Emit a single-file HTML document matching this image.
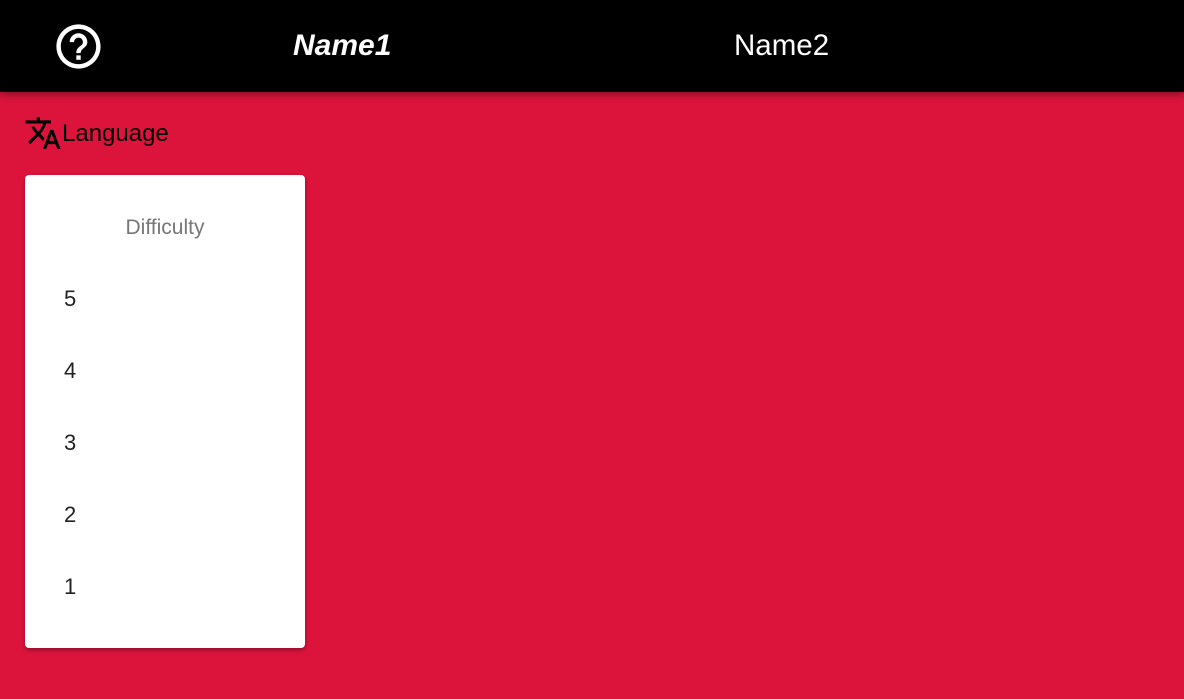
<!DOCTYPE html>
<html><head><style>
body{margin:0;width:1184px;height:699px;background:#dc143c;font-family:"Liberation Sans",sans-serif;overflow:hidden;position:relative}
.hdr{position:absolute;left:0;top:0;width:1184px;height:92px;background:#000;box-shadow:0 2px 8px rgba(0,0,0,.45)}
.t{position:absolute;color:#fff;line-height:32px;top:30px}
.card{position:absolute;left:25px;top:175px;width:280px;height:473px;background:#fff;border-radius:4px;box-shadow:0 2px 5px rgba(0,0,0,.35)}
.it{position:absolute;left:39px;font-size:22px;color:#222;line-height:24px}
</style></head><body>
<div class="hdr">
<svg style="position:absolute;left:52px;top:20px" width="53" height="53" viewBox="0 0 24 24"><path fill="#fff" d="M11 18h2v-2h-2v2zm1-16C6.48 2 2 6.48 2 12s4.480 10 10 10 10-4.48 10-10S17.52 2 12 2zm0 18c-4.41 0-8-3.59-8-8s3.59-8 8-8 8 3.59 8 8-3.59 8-8 8zm0-14c-2.21 0-4 1.790-4 4h2c0-1.1.9-2 2-2s2 .9 2 2c0 2-3 1.75-3 5h2c0-2.25 3-2.5 3-5 0-2.21-1.79-4-4-4z"/></svg>
<div class="t" style="left:293px;font-size:30px;font-weight:bold;font-style:italic">Name1</div>
<div class="t" style="left:734px;font-size:29.5px">Name2</div>
</div>
<svg style="position:absolute;left:24px;top:114px" width="38" height="38" viewBox="0 0 24 24"><path fill="#000" d="M12.87 15.07l-2.54-2.51.03-.03A17.52 17.52 0 0014.07 6H17V4h-7V2H8v2H1v2h11.17C11.5 7.92 10.44 9.75 9 11.35 8.07 10.32 7.3 9.19 6.69 8h-2c.73 1.63 1.73 3.17 2.98 4.56l-5.09 5.02L4 19l5-5 3.11 3.11.76-2.04zM18.5 10h-2L12 22h2l1.12-3h4.75L21 22h2l-4.5-12zm-2.62 7l1.62-4.33L19.12 17h-3.24z"/></svg>
<div style="position:absolute;left:62px;top:120px;font-size:24px;line-height:28px">Language</div>
<div class="card">
<div style="position:absolute;left:0;width:280px;top:41px;text-align:center;font-size:21px;color:#777">Difficulty</div>
<div class="it" style="top:112px">5</div>
<div class="it" style="top:184px">4</div>
<div class="it" style="top:256px">3</div>
<div class="it" style="top:328px">2</div>
<div class="it" style="top:400px">1</div>
</div>
</body></html>
